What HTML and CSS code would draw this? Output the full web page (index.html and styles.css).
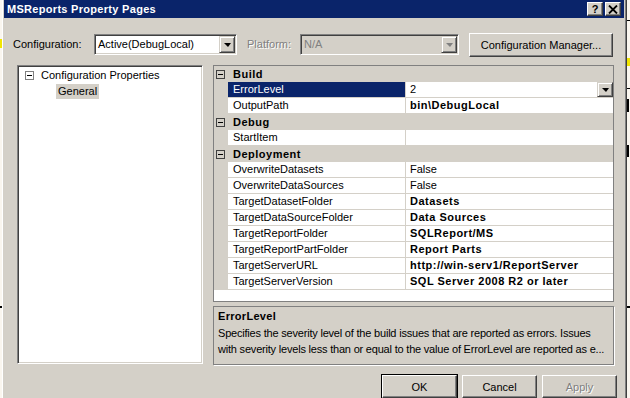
FILE: index.html
```html
<!DOCTYPE html>
<html lang="en">
<head>
    <meta charset="UTF-8">
    <meta name="viewport" content="width=device-width, initial-scale=1.0">
    <title>MSReports Property Pages</title>
    <link rel="stylesheet" href="styles.css">
</head>
<body>
    <div class="window">
        <div class="titlebar">
            <span class="title">MSReports Property Pages</span>
            <div class="caption-buttons">
                <span class="cap-btn help">?</span>
                <span class="cap-btn close">
                    <svg width="10" height="9" viewBox="0 0 10 9">
                        <path d="M1 0.5 L9 8.5 M9 0.5 L1 8.5" stroke="#000" stroke-width="1.8" fill="none"/>
                    </svg>
                </span>
            </div>
        </div>

        <div class="config-row">
            <span class="label config-label">Configuration:</span>
            <div class="combo config-combo">
                <span class="combo-text">Active(DebugLocal)</span>
                <span class="drop-btn"><span class="arrow"></span></span>
            </div>
            <span class="label platform-label">Platform:</span>
            <div class="combo platform-combo">
                <span class="combo-text">N/A</span>
                <span class="drop-btn"><span class="arrow"></span></span>
            </div>
            <button class="btn config-mgr">Configuration Manager...</button>
        </div>

        <div class="main">
            <div class="tree">
                <div class="tree-node">
                    <span class="expander"></span>
                    <span class="tree-label">Configuration Properties</span>
                </div>
                <div class="tree-node child">
                    <span class="tree-label selected">General</span>
                </div>
            </div>

            <div class="right-pane">
                <div class="prop-grid">
                    <div class="category">
                        <span class="margin"><span class="expander"></span></span>
                        <span class="cat-name">Build</span>
                    </div>
                    <div class="prop selected">
                        <span class="margin"></span>
                        <span class="name">ErrorLevel</span>
                        <span class="value">2<span class="drop-btn small"><span class="arrow"></span></span></span>
                    </div>
                    <div class="prop">
                        <span class="margin"></span>
                        <span class="name">OutputPath</span>
                        <span class="value bold">bin\DebugLocal</span>
                    </div>
                    <div class="category">
                        <span class="margin"><span class="expander"></span></span>
                        <span class="cat-name">Debug</span>
                    </div>
                    <div class="prop">
                        <span class="margin"></span>
                        <span class="name">StartItem</span>
                        <span class="value"></span>
                    </div>
                    <div class="category">
                        <span class="margin"><span class="expander"></span></span>
                        <span class="cat-name">Deployment</span>
                    </div>
                    <div class="prop">
                        <span class="margin"></span>
                        <span class="name">OverwriteDatasets</span>
                        <span class="value">False</span>
                    </div>
                    <div class="prop">
                        <span class="margin"></span>
                        <span class="name">OverwriteDataSources</span>
                        <span class="value">False</span>
                    </div>
                    <div class="prop">
                        <span class="margin"></span>
                        <span class="name">TargetDatasetFolder</span>
                        <span class="value bold">Datasets</span>
                    </div>
                    <div class="prop">
                        <span class="margin"></span>
                        <span class="name">TargetDataSourceFolder</span>
                        <span class="value bold">Data Sources</span>
                    </div>
                    <div class="prop">
                        <span class="margin"></span>
                        <span class="name">TargetReportFolder</span>
                        <span class="value bold">SQLReport/MS</span>
                    </div>
                    <div class="prop">
                        <span class="margin"></span>
                        <span class="name">TargetReportPartFolder</span>
                        <span class="value bold">Report Parts</span>
                    </div>
                    <div class="prop">
                        <span class="margin"></span>
                        <span class="name">TargetServerURL</span>
                        <span class="value bold">http://win-serv1/ReportServer</span>
                    </div>
                    <div class="prop">
                        <span class="margin"></span>
                        <span class="name">TargetServerVersion</span>
                        <span class="value bold">SQL Server 2008 R2 or later</span>
                    </div>
                </div>

                <div class="description">
                    <div class="desc-title">ErrorLevel</div>
                    <div class="desc-line">Specifies the severity level of the build issues that are reported as errors. Issues</div>
                    <div class="desc-line">with severity levels less than or equal to the value of ErrorLevel are reported as e...</div>
                </div>
            </div>
        </div>

        <div class="dialog-buttons">
            <button class="btn default">OK</button>
            <button class="btn">Cancel</button>
            <button class="btn" disabled>Apply</button>
        </div>
    </div>
</body>
</html>
```

FILE: styles.css
```css
* {
    margin: 0;
    padding: 0;
    box-sizing: border-box;
}

html, body {
    width: 630px;
    height: 398px;
    overflow: hidden;
}

body {
    font-family: "Liberation Sans", Arial, sans-serif;
    font-size: 11px;
    color: #000;
    /* bits of the desktop showing round the dialog */
    background:
        linear-gradient(#f2e600, #f2e600) 0 39px / 2px 9px no-repeat,
        linear-gradient(#000, #000) 0 306px / 2px 2px no-repeat,
        linear-gradient(#f2e600, #f2e600) 627px 58px / 3px 8px no-repeat,
        linear-gradient(#000, #000) 627px 20px / 3px 1px no-repeat,
        linear-gradient(#000, #000) 627px 88px / 3px 1px no-repeat,
        linear-gradient(#000, #000) 627px 99px / 2px 13px no-repeat,
        linear-gradient(#000, #000) 627px 145px / 2px 12px no-repeat,
        linear-gradient(#000, #000) 627px 306px / 3px 2px no-repeat,
        #faf6ef;
}

.window {
    margin-left: 2px;
    width: 625px;
    height: 410px;
    background-color: #d4d0c8;
    border-left: 1px solid #fff;
    border-right: 1px solid #404040;
    box-shadow: inset -1px 0 #808080;
    padding: 0 2px 0 1px;
}

/* title bar */
.titlebar {
    height: 18px;
    background-color: #0a246a;
    display: flex;
    justify-content: space-between;
    align-items: center;
    padding: 0 3px 0 3px;
}

.title {
    color: #fff;
    font-weight: bold;
    font-size: 11px;
    letter-spacing: 0.3px;
}

.caption-buttons {
    display: flex;
    gap: 2px;
}

.cap-btn {
    width: 16px;
    height: 14px;
    background-color: #d4d0c8;
    border-top: 1px solid #fff;
    border-left: 1px solid #fff;
    border-right: 1px solid #404040;
    border-bottom: 1px solid #404040;
    box-shadow: inset -1px -1px #808080;
    display: flex;
    align-items: center;
    justify-content: center;
    font-weight: bold;
    font-size: 11px;
    line-height: 12px;
}

.cap-btn svg {
    display: block;
    margin-left: -1px;
}

/* raised / sunken controls */
.btn {
    font-family: inherit;
    font-size: 11px;
    color: #000;
    background-color: #d4d0c8;
    border-top: 1px solid #fff;
    border-left: 1px solid #fff;
    border-right: 1px solid #404040;
    border-bottom: 1px solid #404040;
    box-shadow: inset -1px -1px #808080;
}

.btn:disabled {
    color: #808080;
    text-shadow: 1px 1px #fff;
}

.btn.default {
    outline: 1px solid #000;
}

.combo {
    display: flex;
    align-items: flex-start;
    height: 21px;
    background-color: #fff;
    border-top: 1px solid #808080;
    border-left: 1px solid #808080;
    border-right: 1px solid #fff;
    border-bottom: 1px solid #fff;
    box-shadow: inset 1px 1px #404040, inset -1px -1px #d4d0c8;
    padding: 1px;
}

.combo-text {
    flex: 1;
    line-height: 17px;
    padding-left: 2px;
}

.drop-btn {
    width: 16px;
    height: 17px;
    background-color: #d4d0c8;
    border-top: 1px solid #d4d0c8;
    border-left: 1px solid #d4d0c8;
    border-right: 1px solid #404040;
    border-bottom: 1px solid #404040;
    box-shadow: inset 1px 1px #fff, inset -1px -1px #808080;
    display: flex;
    align-items: center;
    justify-content: center;
}

.arrow {
    width: 0;
    height: 0;
    border-left: 4px solid transparent;
    border-right: 3px solid transparent;
    border-top: 4px solid #000;
}

/* configuration row */
.config-row {
    display: flex;
    align-items: flex-start;
    height: 24px;
    margin-top: 15px;
    padding-left: 9px;
}

.label {
    line-height: 21px;
    margin-top: 1px;
}

.config-label {
    width: 81px;
}

.config-combo {
    width: 143px;
    margin-top: 1px;
}

.platform-label {
    width: 53px;
    margin-left: 10px;
    color: #808080;
    text-shadow: 1px 1px #fff;
}

.platform-combo {
    width: 159px;
    margin-top: 1px;
    background-color: #d4d0c8;
    color: #808080;
}

.platform-combo .arrow {
    border-top-color: #808080;
}

.config-mgr {
    width: 144px;
    height: 24px;
    margin-left: 10px;
}

/* main area */
.main {
    display: flex;
    margin-top: 8px;
    padding-left: 13px;
    height: 300px;
}

.tree {
    width: 186px;
    height: 299px;
    background-color: #fff;
    border-top: 1px solid #808080;
    border-left: 1px solid #808080;
    border-right: 1px solid #fff;
    border-bottom: 1px solid #fff;
    box-shadow: inset 1px 1px #404040, inset -1px -1px #d4d0c8;
    padding: 1px 0 0 7px;
}

.tree-node {
    display: flex;
    align-items: center;
    height: 16px;
}

.tree-node .expander {
    margin-right: 7px;
}

.tree-node.child {
    padding-left: 33px;
}

.tree-label {
    line-height: 15px;
    padding: 0 2px;
}

.tree-node .tree-label {
    margin-left: -2px;
}

.tree-label.selected {
    background-color: #d4d0c8;
}

.expander {
    display: inline-block;
    position: relative;
    width: 9px;
    height: 9px;
    border: 1px solid #808080;
    background-color: #fff;
}

.expander::after {
    content: "";
    position: absolute;
    left: 1px;
    top: 3px;
    width: 5px;
    height: 1px;
    background-color: #000;
}

.right-pane {
    width: 401px;
    margin-left: 10px;
}

/* property grid */
.prop-grid {
    height: 237px;
    background-color: #fff;
    border: 1px solid #808080;
}

.category,
.prop {
    display: flex;
    height: 16px;
}

.category {
    background-color: #d4d0c8;
    font-weight: bold;
    letter-spacing: 0.5px;
    line-height: 16px;
}

.category .margin {
    display: flex;
    align-items: center;
    padding-left: 2px;
}

.category .expander {
    border-color: #404040;
    background-color: transparent;
}

.margin {
    width: 14px;
    flex-shrink: 0;
    background-color: #d4d0c8;
}

.cat-name {
    padding-left: 5px;
}

.name {
    width: 178px;
    padding-left: 5px;
    line-height: 15px;
    border-right: 1px solid #d4d0c8;
    border-bottom: 1px solid #d4d0c8;
}

.prop.selected .name {
    background-color: #0a246a;
    color: #fff;
}

.value {
    flex: 1;
    display: flex;
    justify-content: space-between;
    align-items: flex-start;
    padding-left: 4px;
    line-height: 15px;
    border-bottom: 1px solid #d4d0c8;
}

.value.bold {
    font-weight: bold;
    letter-spacing: 0.5px;
}

.drop-btn.small {
    width: 16px;
    height: 15px;
}

/* description */
.description {
    height: 59px;
    margin-top: 4px;
    border: 1px solid #808080;
    box-shadow: 1px 1px 0 #fff;
    padding: 1px 4px 0 4px;
}

.desc-title {
    font-weight: bold;
    letter-spacing: 0.3px;
    line-height: 16px;
    margin-bottom: 1px;
}

.desc-line {
    line-height: 16px;
    letter-spacing: -0.2px;
    white-space: nowrap;
}

/* bottom buttons */
.dialog-buttons {
    display: flex;
    justify-content: flex-end;
    gap: 5px;
    margin-top: 10px;
    padding-right: 7px;
}

.dialog-buttons .btn {
    width: 75px;
    height: 23px;
}
```
